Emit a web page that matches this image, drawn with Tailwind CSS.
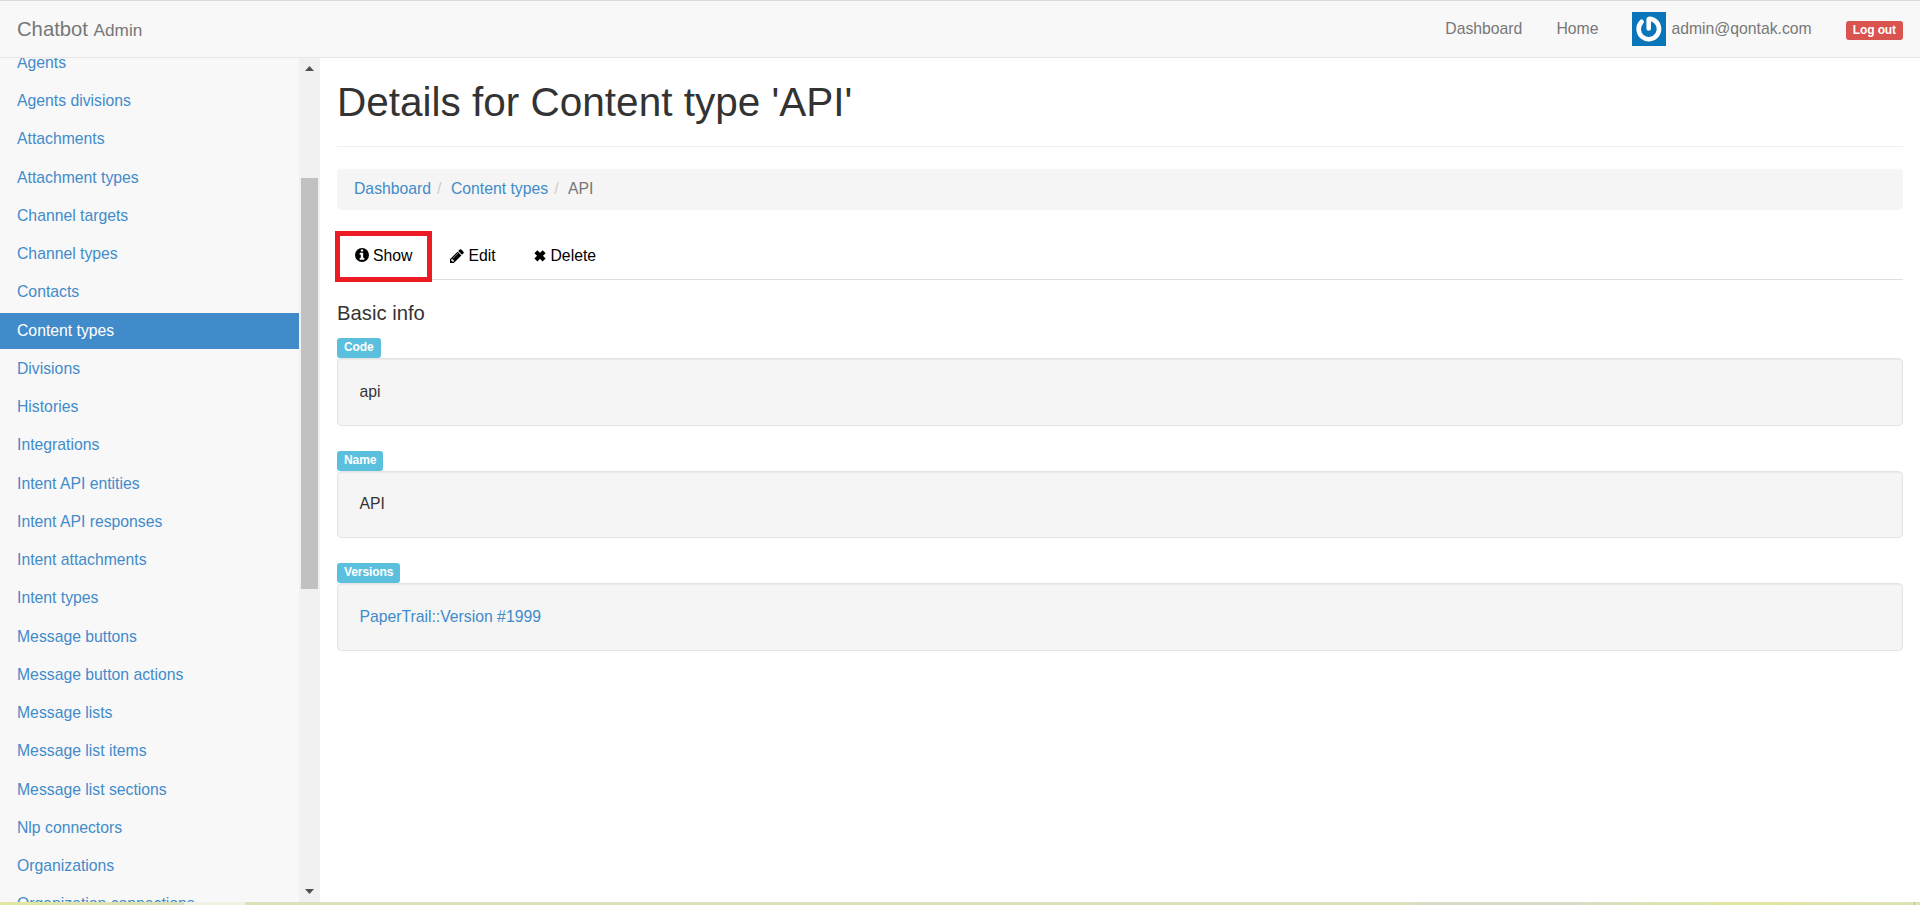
<!DOCTYPE html>
<html lang="en">
<head>
<meta charset="utf-8">
<title>Details for Content type 'API' | Chatbot Admin</title>
<script src="https://cdn.jsdelivr.net/npm/@tailwindcss/browser@4"></script>
</head>
<body class="h-[905px] w-[1920px] overflow-hidden bg-white flex flex-col font-['Liberation_Sans',Arial,sans-serif] text-[15.75px] leading-[22.5px] text-[#333]">
<header class="h-[58px] shrink-0 flex justify-between border-t border-t-[#dadada] border-b border-b-[#e7e7e7] bg-[#f8f8f8] pl-[17px] pr-[17px] text-[#777]">
  <a class="pt-[17px] text-[20.25px] leading-[22.5px]">Chatbot <small class="text-[17.2px]">Admin</small></a>
  <nav class="flex">
    <a class="pt-[17px] mr-[34px]">Dashboard</a>
    <a class="pt-[17px] mr-[34px]">Home</a>
    <a class="flex mr-[34px]">
      <svg class="mt-[11px] mr-[5px] w-[34px] h-[34px]" viewBox="0 0 34 34"><rect width="34" height="34" fill="#0a75b9"/><path d="M9.6 9.8A10.2 10.2 0 1 0 21.5 7.9Q17.8 6.2 16.7 7.2V16.4" fill="none" stroke="#fff" stroke-width="4.6" stroke-linecap="round" stroke-linejoin="round"/></svg>
      <span class="pt-[17px]">admin@qontak.com</span>
    </a>
    <span class="mt-[20px] h-[19px] rounded-[3px] bg-[#d9534f] px-[7px] text-[12px] leading-[18px] font-bold tracking-[-0.1px] text-white">Log out</span>
  </nav>
</header>
<div class="flex h-[844px] shrink-0">
  <aside class="w-[299px] overflow-hidden bg-[#f8f8f8]">
    <ul class="-mt-[12.75px] flex flex-col gap-[2.25px] text-[#428bca] *:h-[36px] *:shrink-0 *:pt-[6.5px] *:pl-[17px]">
      <li>Agents</li><li>Agents divisions</li><li>Attachments</li><li>Attachment types</li><li>Channel targets</li><li>Channel types</li><li>Contacts</li>
      <li class="bg-[#428bca] text-white">Content types</li>
      <li>Divisions</li><li>Histories</li><li>Integrations</li><li>Intent API entities</li><li>Intent API responses</li><li>Intent attachments</li><li>Intent types</li><li>Message buttons</li><li>Message button actions</li><li>Message lists</li><li>Message list items</li><li>Message list sections</li><li>Nlp connectors</li><li>Organizations</li><li>Organization connections</li>
    </ul>
  </aside>
  <div class="w-[21px] bg-[#f1f1f1] flex flex-col items-center">
    <svg class="mt-[8px] w-[9px] h-[5px] shrink-0" viewBox="0 0 9 5"><path d="M0 5L4.5 0L9 5Z" fill="#505050"/></svg>
    <div class="mt-[107px] w-[17px] h-[411px] shrink-0 bg-[#c1c1c1]"></div>
    <svg class="mt-[300px] w-[9px] h-[5px] shrink-0" viewBox="0 0 9 5"><path d="M0 0L4.5 5L9 0Z" fill="#505050"/></svg>
  </div>
  <main class="flex-1 pl-[17px] pr-[17px]">
    <h1 class="h-[89px] pt-[22px] border-b border-[#eee] text-[40.5px] leading-[44.5px]">Details for Content type 'API'</h1>
    <ol class="mt-[22px] h-[41px] flex rounded-[4.5px] bg-[#f5f5f5] pl-[17px] pt-[9px] text-[#428bca]">
      <li>Dashboard</li>
      <li class="pl-[6px] text-[#ccc]">/</li><li class="pl-[9.5px]">Content types</li>
      <li class="pl-[6px] text-[#ccc]">/</li><li class="pl-[9.5px] text-[#777]">API</li>
    </ol>
    <div class="mt-[22px] h-[48px] relative flex border-b border-[#ddd] text-black">
      <a class="w-[95px] flex pl-[18px] pt-[13px]"><svg class="mt-[3px] mr-[4px] w-[14px] h-[14px]" viewBox="0 0 1536 1536"><path fill-rule="evenodd" d="M768 0a768 768 0 1 1 0 1536A768 768 0 0 1 768 0ZM1024 1248V1088Q1024 1056 992 1056H896V544Q896 512 864 512H544Q512 512 512 544V704Q512 736 544 736H640V1056H544Q512 1056 512 1088V1248Q512 1280 544 1280H992Q1024 1280 1024 1248ZM896 352V192Q896 160 864 160H672Q640 160 640 192V352Q640 384 672 384H864Q896 384 896 352Z"/></svg>Show</a>
      <a class="w-[84px] flex pl-[18px] pt-[13px]"><svg class="mt-[4px] mr-[4.5px] w-[14px] h-[14px]" viewBox="0 0 1536 1536"><path fill-rule="evenodd" d="M363 1408L454 1317L219 1082L128 1173V1280H256V1408ZM886 480Q886 458 864 458Q854 458 847 465L305 1007Q298 1014 298 1024Q298 1046 320 1046Q330 1046 337 1039L879 497Q886 490 886 480ZM832 288L1248 704L416 1536H0V1120ZM1515 384Q1515 437 1478 474L1312 640L896 224L1062 59Q1098 21 1152 21Q1205 21 1243 59L1478 293Q1515 332 1515 384Z"/></svg>Edit</a>
      <a class="flex pl-[18px] pt-[13px]"><svg class="mt-[5px] mr-[4.5px] w-[12px] h-[12px]" viewBox="0 0 12 12"><path d="M1.9 1.7L10.1 9.9M10.1 1.7L1.9 9.9" stroke="#000" stroke-width="4.2"/></svg>Delete</a>
      <div class="absolute -left-[2px] -top-[1px] w-[97px] h-[51px] border-5 border-[#ed1c24]"></div>
    </div>
    <h4 class="mt-[22px] h-[36px] text-[20.25px] leading-[22.25px]">Basic info</h4>
    <section class="h-[112.5px]">
      <div class="w-fit h-[20px] rounded-[3px] bg-[#5bc0de] px-[7px] text-[12px] leading-[18px] font-bold tracking-[-0.1px] text-white">Code</div>
      <div class="h-[68px] rounded-[4.5px] border border-[#e3e3e3] bg-[#f5f5f5] shadow-[inset_0_1px_1px_rgba(0,0,0,0.05)] px-[21.4px] pt-[22px]">api</div>
    </section>
    <section class="h-[112.5px]">
      <div class="w-fit h-[20px] rounded-[3px] bg-[#5bc0de] px-[7px] text-[12px] leading-[18px] font-bold tracking-[-0.1px] text-white">Name</div>
      <div class="h-[67px] rounded-[4.5px] border border-[#e3e3e3] bg-[#f5f5f5] shadow-[inset_0_1px_1px_rgba(0,0,0,0.05)] px-[21.4px] pt-[21px]">API</div>
    </section>
    <section class="h-[112.5px]">
      <div class="w-fit h-[20px] rounded-[3px] bg-[#5bc0de] px-[7px] text-[12px] leading-[18px] font-bold tracking-[-0.1px] text-white">Versions</div>
      <div class="h-[68px] rounded-[4.5px] border border-[#e3e3e3] bg-[#f5f5f5] shadow-[inset_0_1px_1px_rgba(0,0,0,0.05)] px-[21.4px] pt-[22px] text-[#428bca]">PaperTrail::Version #1999</div>
    </section>
  </main>
</div>
<footer class="flex h-[3px] shrink-0"><div class="w-[184px] bg-linear-to-r from-[#e2e7a0] to-[#d9dfba]"></div><div class="w-[61px] bg-[#eff1e2]"></div><div class="flex-1 bg-[#dbe1b8]"></div><div class="w-[160px] bg-[#d9ddc6]"></div><div class="w-[342px] bg-linear-to-r from-[#d9ddc6] via-[#e2e7a0] to-[#dee1b4]"></div><div class="w-px bg-[#b4b794]"></div><div class="w-[5px] bg-[#dee1b4]"></div></footer>
</body>
</html>
